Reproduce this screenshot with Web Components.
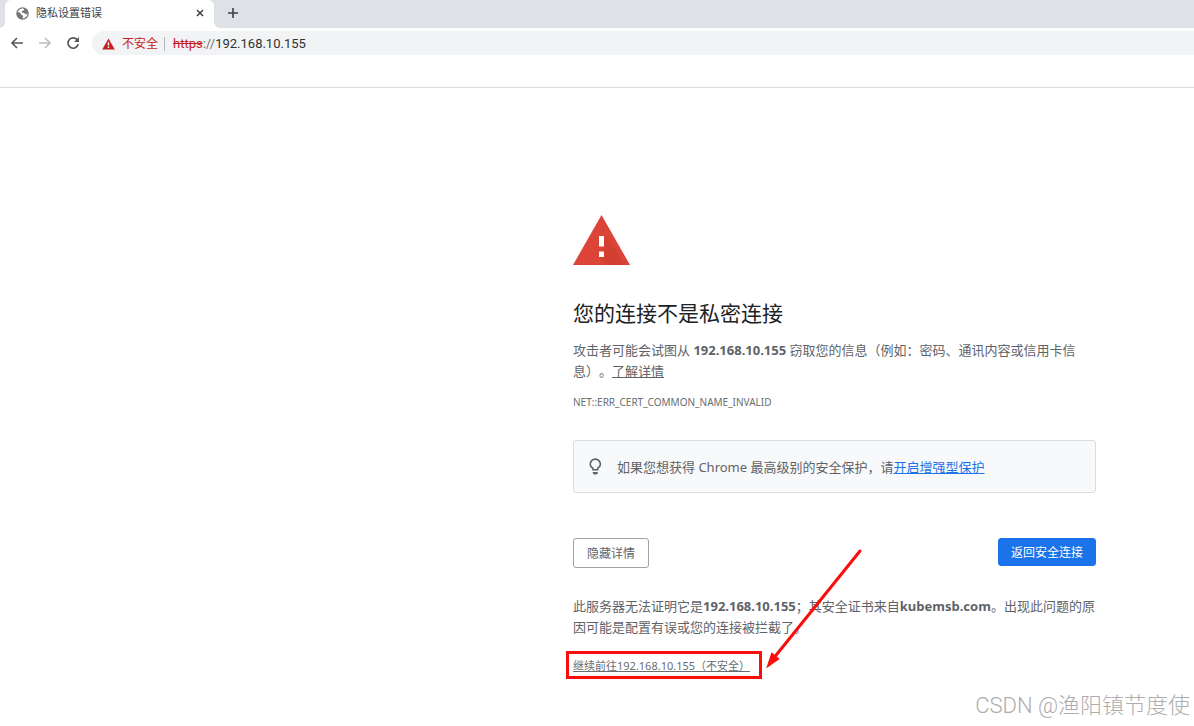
<!DOCTYPE html>
<html lang="zh-CN">
<head>
<meta charset="utf-8">
<meta name="viewport" content="width=device-width, initial-scale=1">
<title>隐私设置错误</title>
<style>
  html, body { margin: 0; min-height: 100%; background: #fff; }
  body { font-family: "Noto Sans", "Noto Sans CJK SC", sans-serif; font-size: 13px; line-height: 21px; color: #5f6368; text-spacing-trim: space-all; }
</style>
</head>
<body>
<privacy-page></privacy-page>

<script>
const define = (name, html) => {
  const template = document.createElement('template');
  template.innerHTML = html;
  customElements.define(name, class extends HTMLElement {
    constructor() {
      super();
      this.attachShadow({ mode: 'open' }).append(template.content.cloneNode(true));
    }
  });
};

define('tab-strip', `
  <style>
    :host { display: flex; height: 28px; padding-left: 5px; background: #dee1e6; color: #3c4043; }
    .tab { position: relative; display: flex; align-items: center; box-sizing: border-box; width: 209px; padding: 0 8px 2px 11px; background: #fff; border-radius: 6px 6px 0 0; }
    .tab::before, .tab::after { content: ""; position: absolute; bottom: 0; width: 6px; height: 6px; }
    .tab::before { right: 100%; background: radial-gradient(circle at 0 0, transparent 6px, #fff 6px); }
    .tab::after { left: 100%; background: radial-gradient(circle at 100% 0, transparent 6px, #fff 6px); }
    .title { flex: 1; margin-left: 7px; font-size: 11px; line-height: 16px; white-space: nowrap; }
    button { display: flex; align-items: center; justify-content: center; border: 0; padding: 0; background: none; color: #3c4043; width: 12px; height: 24px; }
    .new { width: 16px; height: 26px; margin-left: 11px; }
    svg { display: block; }
  </style>
  <div class="tab">
    <svg width="13" height="13" viewBox="0 0 24 24" aria-hidden="true">
      <circle cx="12" cy="12" r="11.5" fill="#747679"/>
      <path fill="#fff" d="M14 3c2 1 1 3-1 4-2 0-3 1-2 3 2 1 5 0 6 3 1 1 3 0 4-1 0 5-4 9-9 9 0-2 2-3 1-5-2-1-4-1-4-4C7 10 4 9 3 10 4 6 8 2 14 3Z"/>
    </svg>
    <span class="title">隐私设置错误</span>
    <button aria-label="关闭标签页"><svg width="8" height="8" viewBox="0 0 8 8"><path d="M1 1l6 6M7 1L1 7" stroke="currentColor" stroke-width="1.5" fill="none"/></svg></button>
  </div>
  <button class="new" aria-label="打开新的标签页"><svg width="12" height="12" viewBox="0 0 12 12"><path d="M6 1v10M1 6h10" stroke="currentColor" stroke-width="1.6" fill="none"/></svg></button>
`);

define('address-bar', `
  <style>
    :host { display: flex; align-items: center; height: 30px; padding-left: 9px; gap: 12px; background: #fff; }
    button { display: flex; align-items: center; justify-content: center; width: 16px; height: 24px; padding: 0; border: 0; background: none; color: #55595d; }
    button[disabled] { color: #bcbec1; }
    .box { flex: 1; display: flex; align-items: center; box-sizing: border-box; height: 24px; margin-left: -1px; padding: 1px 0 0 10px; background: #f1f3f4; border-radius: 12px 0 0 12px; font-size: 12px; line-height: 17px; white-space: nowrap; }
    .warn { color: #c5221f; margin-left: 7px; }
    .bar { width: 1px; height: 14px; margin: 0 8px 0 6px; background: #b4b7ba; }
    .url { font-family: Roboto, sans-serif; font-size: 13px; color: #303235; }
    .url s { color: #c5221f; }
    .url i { font-style: normal; color: #6c7074; }
    svg { display: block; }
  </style>
  <button aria-label="后退"><svg width="16" height="16" viewBox="0 0 16 16"><path d="M14 8H3M8 3L3 8l5 5" stroke="currentColor" stroke-width="1.6" fill="none"/></svg></button>
  <button aria-label="前进" disabled><svg width="16" height="16" viewBox="0 0 16 16"><path d="M2 8h11M8 3l5 5-5 5" stroke="currentColor" stroke-width="1.6" fill="none"/></svg></button>
  <button aria-label="重新加载"><svg width="16" height="16" viewBox="0 0 16 16"><path d="M12.7 5.5A5.2 5.2 0 1 0 13.2 9.3" stroke="currentColor" stroke-width="1.7" fill="none"/><path d="M14 2v5H9z" fill="currentColor"/></svg></button>
  <div class="box">
    <svg width="13" height="12" viewBox="0 0 13 12" aria-hidden="true"><path d="M6.5 0.5L12.8 11.5H.2z" fill="#c5221f"/><path d="M5.8 4.2h1.4v3.3H5.8zM5.8 8.5h1.4v1.4H5.8z" fill="#fff"/></svg>
    <span class="warn">不安全</span><span class="bar"></span>
    <span class="url"><s>https</s><i>://</i>192.168.10.155</span>
  </div>
`);

define('tip-box', `
  <style>
    :host { display: flex; align-items: center; box-sizing: border-box; min-height: 53px; padding: 1px 14px 0; border: 1px solid #dadce0; border-radius: 3px; background: #f8f9fa; }
    svg { flex: none; margin: 0 14px 0 0; }
    p { margin: 0; }
  </style>
  <svg width="15" height="20" viewBox="0 0 15 20" aria-hidden="true"><path d="M4.9 12.7v-1.5C3.1 10.2 2.2 8.9 2.2 7.2a5.1 5.1 0 0 1 10.2 0c0 1.7-.9 3-2.7 4v1.5z" fill="none" stroke="#5f6368" stroke-width="1.6"/><path d="M4.8 15h5v1.7h-1v.7h-3v-.7h-1z" fill="#5f6368"/></svg>
  <p><slot></slot></p>
`);

define('action-button', `
  <style>
    :host { display: block; }
    button { display: block; box-sizing: border-box; height: 30px; padding: 1px 13px 0; border: 1px solid #9fa2a6; border-radius: 3px; background: #fff; color: #5f6368; font: inherit; font-size: 12px; line-height: 26px; }
    :host([primary]) button { height: 28px; padding: 1px 12px 0; border-color: #1a73e8; background: #1a73e8; color: #fff; }
  </style>
  <button type="button"><slot></slot></button>
`);

define('marked-link', `
  <style>
    :host { position: relative; display: block; width: fit-content; font-size: 11px; line-height: 18px; }
    a { color: #696e72; padding-right: 1px; }
    .frame { position: absolute; inset: -6px -11px -4px -7px; border: 3px solid #fc0d0d; pointer-events: none; }
    svg { position: absolute; left: 100%; bottom: 5px; margin-left: 12px; overflow: visible; pointer-events: none; }
  </style>
  <a href="#proceed"><slot></slot></a>
  <span class="frame"></span>
  <svg width="100" height="122" viewBox="0 0 100 122" aria-hidden="true">
    <path d="M97 3L10 111" stroke="#fc0d0d" stroke-width="3" stroke-linecap="round"/>
    <path d="M5 118l4-12 6 5z" fill="#fc0d0d" stroke="#fc0d0d" stroke-width="2"/>
  </svg>
`);

define('privacy-error', `
  <style>
    :host { display: block; box-sizing: border-box; width: min(523px, 100% - 98px); margin: 0 98px 0 auto; padding: 127px 0 52px; }
    .icon { display: block; width: 57px; height: 50px; }
    h1 { margin: 33px 0 12px; font-size: 21px; line-height: 30px; font-weight: 400; color: #202124; }
    p { margin: 0; }
    a { color: inherit; }
    tip-box a { color: #1a73e8; }
    .code { margin: 11px 0 29px; font-size: 10px; line-height: 18px; color: #696e72; }
    .actions { display: flex; justify-content: space-between; align-items: flex-start; margin: 45px 0 28px; }
    marked-link { margin-top: 19px; }
  </style>
  <svg class="icon" viewBox="0 0 57 50" aria-hidden="true">
    <path d="M28.500 0L57 50H0z" fill="#db4437"/>
    <path d="M31 21L43 34l8 16H34l-8-9 5-9z" fill="#c53929" opacity=".35"/>
    <path d="M26 21h5v10.500h-5zM26 36.500h5V42h-5z" fill="#fff"/>
  </svg>
  <h1>您的连接不是私密连接</h1>
  <p>攻击者可能会试图从 <strong>192.168.10.155</strong> 窃取您的信息（例如：密码、通讯内容或信用卡信息）。<a href="#learn">了解详情</a></p>
  <p class="code">NET::ERR_CERT_COMMON_NAME_INVALID</p>
  <tip-box>如果您想获得 Chrome 最高级别的安全保护，请<a href="#enhanced">开启增强型保护</a></tip-box>
  <div class="actions">
    <action-button>隐藏详情</action-button>
    <action-button primary>返回安全连接</action-button>
  </div>
  <p>此服务器无法证明它是<strong>192.168.10.155</strong>；其安全证书来自<strong>kubemsb.com</strong>。出现此问题的原因可能是配置有误或您的连接被拦截了。</p>
  <marked-link>继续前往192.168.10.155（不安全）</marked-link>
`);

define('privacy-page', `
  <style>
    :host { position: relative; display: block; }
    .bookmarks { height: 29px; border-bottom: 1px solid #dadce0; }
    .watermark { position: absolute; right: 4px; bottom: 5px; font-size: 22px; line-height: 32px; color: #adadad; white-space: nowrap; font-family: Roboto, "Noto Sans CJK SC", sans-serif; font-weight: 300; }
  </style>
  <header>
    <tab-strip></tab-strip>
    <address-bar></address-bar>
    <div class="bookmarks"></div>
  </header>
  <main><privacy-error></privacy-error></main>
  <div class="watermark">CSDN @渔阳镇节度使</div>
`);
</script>
</body>
</html>
